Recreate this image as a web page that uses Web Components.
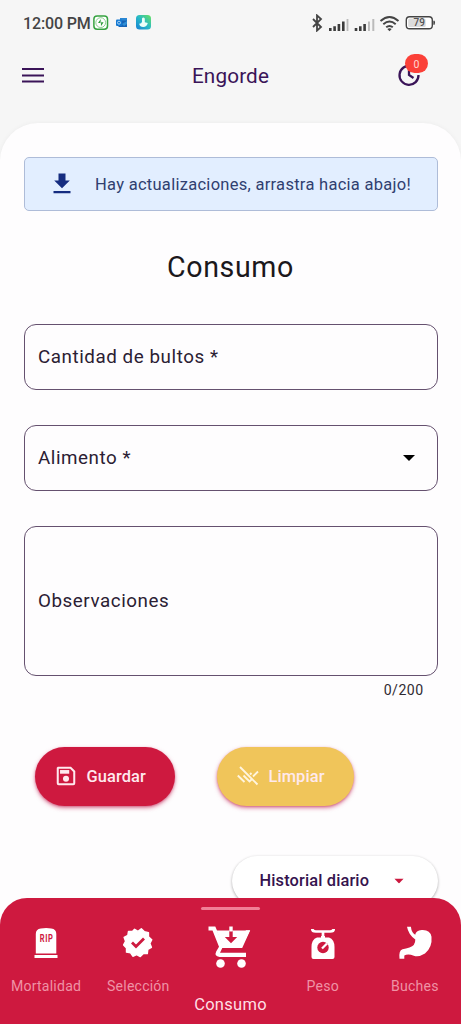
<!DOCTYPE html>
<html lang="es">
<head>
<meta charset="utf-8">
<title>Engorde</title>
<style>
html,body{margin:0;height:100%}
body{font-family:Roboto,"Noto Sans",sans-serif;background:#f6f6f6;overflow:hidden}
</style>
</head>
<body>
<engorde-app></engorde-app>
<script>
const define = (name, html) => {
  const template = document.createElement('template');
  template.innerHTML = html;
  customElements.define(name, class extends HTMLElement {
    constructor() {
      super();
      this.attachShadow({mode: 'open'}).append(template.content.cloneNode(true));
    }
  });
};

define('status-bar', `
<style>
:host{display:flex;align-items:center;height:46px;padding:0 25px 0 23px;box-sizing:border-box;color:#444}
.time{font-size:16px;font-weight:500;line-height:20px;padding-top:1px;width:70px;white-space:nowrap;letter-spacing:-.15px}
svg{display:block;flex:none}
.right{margin-left:auto}
</style>
<span class="time">12:00 PM</span>
<svg width="59" height="16" viewBox="0 0 59 16">
  <rect x=".9" y=".9" width="13.6" height="13.4" rx="3.2" fill="#fff" stroke="#36a340" stroke-width="1.5"/>
  <circle cx="7.7" cy="7.6" r="4.9" fill="none" stroke="#6fc275" stroke-width=".8"/>
  <path d="M7.800 4 5 8h2.300v2.300zM7.900 11.200l2.700-4H8.300V5z" fill="#2c9a38"/>
  <path d="M27 3h7v3h-7z" fill="#2b87d3"/><path d="M25.500 5.500H34V12h-8.500z" fill="#1763b5"/>
  <path d="m29 9 5-3v3l-3 2z" fill="#2f8fd6"/>
  <rect x="23" y="4.500" width="6" height="6.500" rx="1" fill="#1478d1"/><circle cx="26" cy="7.700" r="1.500" fill="none" stroke="#b5daf8" stroke-width=".9"/>
  <defs><linearGradient id="g" x1="1" y1="0" x2="0" y2="1"><stop offset="0" stop-color="#6be35f"/><stop offset=".5" stop-color="#27b9c6"/><stop offset="1" stop-color="#1680d5"/></linearGradient></defs>
  <rect x="43" y="0" width="15" height="14.500" rx="3.500" fill="url(#g)"/>
  <path d="M49 3.500q1.200-1.800 2.800 0v3.700l3 .7q-1 4-4.600 4-3.300 0-4-3.200 2.500-.2 2.800-2z" fill="#ecfff9"/>
</svg>
<svg class="right" width="125" height="18" viewBox="0 0 125 18">
  <path d="m2 5 8 8-4 3.600V1.400L10 5l-8 8" fill="none" stroke="#444" stroke-width="1.800"/>
  <g fill="#3c3c3c"><path d="M18 14h2.600v3H18zM22.300 12.300h2.600V17h-2.600zM26.600 10h2.600v7h-2.600zM31 7.500h2.600v9.500H31z"/><path d="M43.700 14h2.600v3h-2.600zM48 12.300h2.600V17H48zM52.300 10h2.600v7h-2.600z"/></g>
  <path d="M35.600 5h1.800v12h-1.800zM57 7.500h1.900V17H57zM61.300 5h2v12h-2z" fill="#bbb"/>
  <g fill="none" stroke="#444" stroke-width="2"><path d="M69.500 7q9-8 18 0M72.300 10.200q6.200-5.300 12.400 0M75.200 13.300q3.300-2.700 6.600 0"/></g><path d="m76.300 14.900 2.200 2.300 2.200-2.300q-2.200-1.400-4.400 0z" fill="#444"/>
  <rect x="95.300" y="2.800" width="26" height="12" rx="3.300" fill="#fff" stroke="#444" stroke-width="1.400"/>
  <rect x="97.200" y="4.600" width="17.500" height="8.400" rx="1.500" fill="#dcdcdc"/>
  <path d="M122.300 6.800h1.300q.9 1.700 0 4h-1.300z" fill="#444"/>
  <text x="108.300" y="12.400" font-family="Roboto" font-weight="500" font-size="10" text-anchor="middle" fill="#555">79</text>
</svg>`);

define('app-header', `
<style>
:host{display:grid;grid-template-columns:52px 1fr 52px;align-items:center;height:60px;padding:0 21px;box-sizing:border-box;color:#3a1458}
h1{margin:0;text-align:center;font-size:20.700px;font-weight:400;line-height:28px;letter-spacing:.15px}
svg{display:block}
.sync{position:relative;justify-self:end;width:40px;height:40px;margin-right:9px}
.sync svg{position:absolute;left:6px;top:7px}
.badge{position:absolute;left:14px;top:-2px;width:23px;height:19px;border-radius:10px;background:#fb4038;color:#ffd9d4;font-size:10.500px;line-height:21px;text-align:center}
</style>
<svg width="24" height="24" viewBox="0 0 24 24"><path d="M1 5h22M1 11.500h22M1 17.500h22" stroke="#3a1458" stroke-width="2.200"/></svg>
<h1>Engorde</h1>
<div class="sync">
  <svg width="24" height="24" viewBox="0 0 24 24"><path d="M14 3A9.500 9.500 0 1 0 21.500 12M12 6.500V12l4.500 3" fill="none" stroke="#3a1458" stroke-width="2.300"/></svg>
  <span class="badge">0</span>
</div>`);

define('update-banner', `
<style>
:host{display:flex;align-items:center;height:54px;box-sizing:border-box;border:1px solid #aebcd8;border-radius:5px;background:#e2eeff;color:#303f70;padding-left:25px}
svg{flex:none;margin-right:21.500px}
span{font-size:16.500px;line-height:24px;letter-spacing:.28px;white-space:nowrap;padding-top:2px}
</style>
<svg width="24" height="24" viewBox="0 0 24 24"><path d="M8.500 1.500h7v7h4.300L12 16.300 4.200 8.500h4.300zM3.500 19h17v2.300h-17z" fill="#152c80"/></svg>
<span><slot></slot></span>`);

define('form-field', `
<style>
:host{display:flex;align-items:center;justify-content:space-between;height:66px;box-sizing:border-box;border:1.200px solid #65516f;border-radius:12px;padding:0 22px 1px 13.500px;color:#2b2033;font-size:18.800px;line-height:26px;letter-spacing:.56px}
:host([multiline]){height:150px}
</style>
<slot></slot><slot name="trailing"></slot>`);

define('caret-icon', `
<style>:host{display:block;width:12px;height:6px}svg{display:block}</style>
<svg width="12" height="6" viewBox="0 0 12 6"><path d="M0 0h12L6 6z" fill="currentColor"/></svg>`);

define('action-button', `
<style>
:host{display:flex;align-items:center;height:59px;border-radius:30px;box-sizing:border-box;padding-left:20px;color:#ffe9ee;background:var(--fill);box-shadow:0 2px 4px #c5265790,0 1px 2px #b0204e55;font-size:16.400px;font-weight:500;letter-spacing:.1px}
::slotted(svg){display:block;margin-right:10px;flex:none}
</style>
<slot name="icon"></slot><slot></slot>`);

define('history-chip', `
<style>
:host{display:flex;align-items:center;width:206px;height:50px;border-radius:25px;box-sizing:border-box;padding:0 0 1px 28px;background:#fff;color:#35134e;box-shadow:0 1px 3px #0005;font-size:16.400px;font-weight:500;letter-spacing:.14px}
caret-icon{color:#cb193f;margin-left:24px;transform:scale(.8)}
</style>
<slot></slot><caret-icon></caret-icon>`);

define('nav-item', `
<style>
:host{display:flex;flex-direction:column;align-items:center;color:#ef92a5;font-size:14.100px;line-height:18px;letter-spacing:.2px;padding-top:27px;box-sizing:border-box}
::slotted(svg){display:block;margin-bottom:16px;overflow:visible}
:host([active]){color:#ffdfe5;font-size:16.500px;line-height:20px;letter-spacing:.28px;padding-top:9px}
i{display:none;width:59px;height:3px;border-radius:1.500px;background:#f18096;margin-bottom:14px}
:host([active]) i{display:block}
:host([active]) ::slotted(svg){margin-bottom:27px}
</style>
<i></i><slot name="icon"></slot><span><slot></slot></span>`);

define('bottom-nav', `
<style>
:host{display:grid;grid-template-columns:repeat(5,1fr);height:126px;border-radius:27px 27px 0 0;background:#ce193f}
</style>
<nav-item><svg slot="icon" width="36" height="36" viewBox="0 0 36 36"><path d="M7.800 28.500V9q0-5 5-5.500 5.500-1 10.500 0 5 .5 5 5.500v19.500zM6.500 30h23v3h-23z" fill="#fff"/><text transform="translate(18.600 17.300) scale(.72 1)" text-anchor="middle" font-family="Roboto" font-size="10.500" font-weight="700" style="letter-spacing:.9px" fill="#ce193f">RIP</text></svg>Mortalidad</nav-item>
<nav-item><svg slot="icon" width="36" height="36" viewBox="0 0 36 36"><path transform="translate(.9 1.200) scale(.95)" d="m18 5.500 3.500-2.700 3.300 3.100 4.200.9v4.300l3.500 3.100-2 3.900 1.600 4.100-3.800 2.200-.5 4.400-4.400.1-3 3-3.800-2-4 1.700-2.400-3.600-4.300-.7v-4.300l-3-3.300 2-3.800-1.500-4.200 3.900-2 .7-4.200 4.400-.1 2-2.200z" fill="#fff" stroke="#fff" stroke-width="1.500" stroke-linejoin="round"/><path d="m12 17.500 4 4 8-8" fill="none" stroke="#ce193f" stroke-width="2.800"/></svg>Selección</nav-item>
<nav-item active><svg slot="icon" width="44" height="44" viewBox="0 0 44 44"><g transform="translate(-1 -.5)"><path d="M1.500 3h6.800l7 16.500h16.500L39 6.800h4.200l-8 17.700H15.300l-2.300 4.700h26v4.200H12.500q-5.500-.8-3.300-5.500l2.800-4.600L5.500 7h-4z" fill="#fff"/><path d="M9.500 7H43l-7.500 15H15.600z" fill="#fff"/><path d="M22.300 7v6.500h-4.500l6.200 6.200 6.200-6.200h-4.500V7z" fill="#ce193f"/><path d="M22.300 3h3.400v5h-3.400z" fill="#fff"/><circle cx="13.500" cy="40" r="4.300" fill="#fff"/><circle cx="34.500" cy="40" r="4.300" fill="#fff"/></g></svg>Consumo</nav-item>
<nav-item><svg slot="icon" width="36" height="36" viewBox="0 0 36 36"><path d="M7.300 4q0 2.500 3.500 2.500h14.400q3.500 0 3.500-2.500M18 7v6" fill="none" stroke="#fff" stroke-width="2.700"/><path d="M16 11h4v1.500h4q5.500 2 5.500 9.500v10q0 2-2 2h-19q-2 0-2-2V22q0-7.500 5.500-9.500h4z" fill="#fff"/><circle cx="18" cy="22.500" r="5.700" fill="#ce193f"/><path d="m17 23.500 5-5" stroke="#fff" stroke-width="2.300"/></svg>Peso</nav-item>
<nav-item><svg slot="icon" width="36" height="36" viewBox="0 0 36 36"><path d="M10 1.800h3.900q.7 6 4.300 8 .5-4.300 6.500-4.800 8.500-.5 9.800 6.700 1 10.500-6.500 16.800-6.500 4-11.200 2.200-5.800-2.200-9.500-.2v3.200H2.500q-1-8.200 3-9.500 3.500-.4 7-1.700 6-2 5.800-8-7-5-8.300-12.700z" fill="#fff"/></svg>Buches</nav-item>`);

define('engorde-app', `
<style>
:host{display:flex;flex-direction:column;position:relative;height:1024px;overflow:hidden;background:#f6f6f6}
app-header{margin-bottom:17px}
main{flex:1;display:flex;flex-direction:column;background:#fefdfe;border-radius:38px 38px 0 0;padding:34px 23.500px 0;box-shadow:0 0 5px #0000000c}
h2{margin:37px 0 0;height:38px;text-align:center;font-size:28.600px;font-weight:400;line-height:38px;color:#1b181c;letter-spacing:.6px}
form-field{margin-top:35px}
form-field:first-of-type{margin-top:38px}
.count{align-self:flex-end;margin:4px 14px 0 0;font-size:14.100px;line-height:20px;letter-spacing:.45px;color:#302a32}
.actions{display:flex;gap:42px;margin:46.500px 0 50.500px 11px}
.save{width:140px;--fill:#ce193f}
.clear{width:137px;--fill:#f0c55a}
history-chip{align-self:flex-end}
bottom-nav{position:absolute;inset:auto 0 0}
</style>
<status-bar></status-bar>
<app-header></app-header>
<main>
  <update-banner>Hay actualizaciones, arrastra hacia abajo!</update-banner>
  <h2>Consumo</h2>
  <form-field>Cantidad de bultos *</form-field>
  <form-field>Alimento *<caret-icon slot="trailing" style="color:#000"></caret-icon></form-field>
  <form-field multiline>Observaciones</form-field>
  <div class="count">0/200</div>
  <div class="actions">
    <action-button class="save"><svg slot="icon" width="22" height="22" viewBox="0 0 24 24"><path d="M3.500 3h13.500l4 4v13q0 1-1 1H4q-1 0-1-1V3.500z" fill="none" stroke="#ffe9ee" stroke-width="2.200"/><path d="M5.500 5.500h10v4h-10z" fill="#ffe9ee"/><circle cx="12" cy="15" r="3.300" fill="#ffe9ee"/></svg>Guardar</action-button>
    <action-button class="clear"><svg slot="icon" width="22" height="22" viewBox="0 0 22 22"><path d="m3 2 17.500 17.500M.8 10.500 7.500 17M6.500 10.500l6 6 2-2M13 9.500l1.500-1.500M16 11.500l5-5" fill="none" stroke="#fff5df" stroke-width="1.900"/></svg>Limpiar</action-button>
  </div>
  <history-chip>Historial diario</history-chip>
</main>
<bottom-nav></bottom-nav>`);
</script>
</body>
</html>
